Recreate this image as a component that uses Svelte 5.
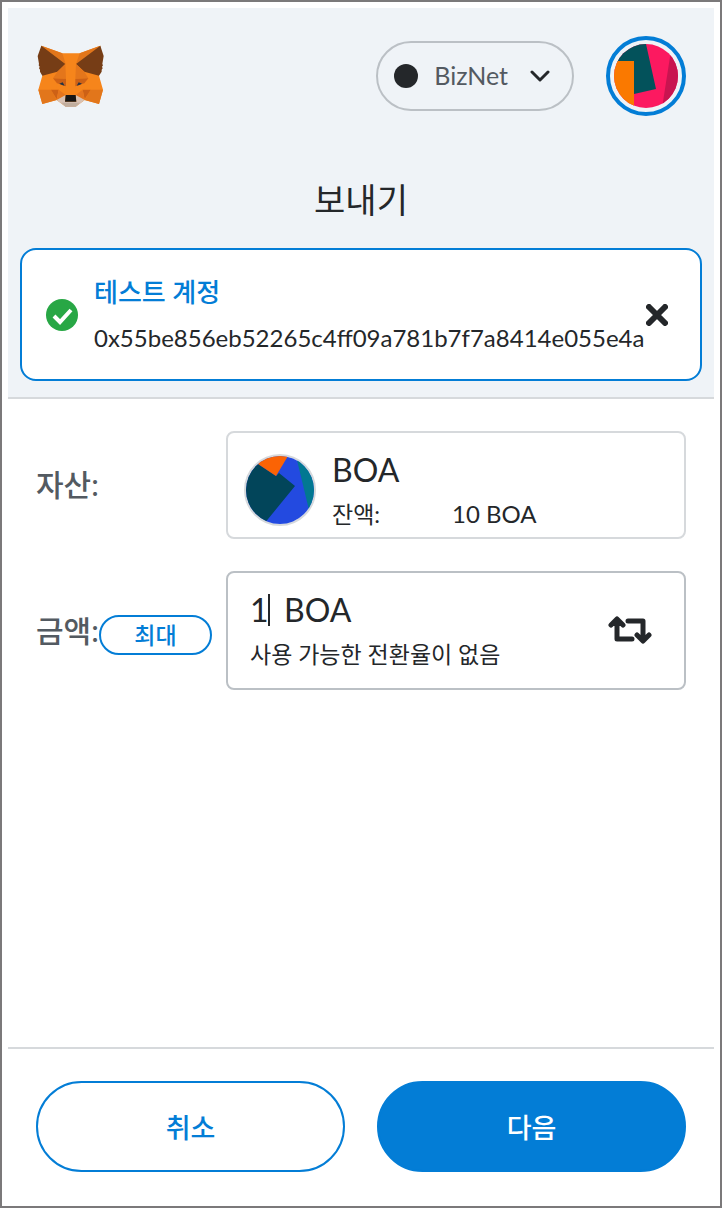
<script>
  let network = $state('BizNet');
  let amount = $state('1');
  const recipient = {
    name: '테스트 계정',
    address: '0x55be856eb52265c4ff09a781b7f7a8414e055e4a'
  };
  const token = { symbol: 'BOA', balance: '10' };
</script>

<div class="window">
  <header class="top">
    <div class="bar">
      <svg class="fox" viewBox="0 0 210 192" role="img" aria-label="MetaMask">
        <polygon points="16,5 79,28 131,28 193,5 189,95 201,137 189,180 146,168 119,188 89,188 62,168 19,180 7,137 19,95" fill="#f6851b" />
        <polygon points="16,5 79,28 89,60" fill="#e2761b" />
        <polygon points="193,5 131,28 120,60" fill="#e2761b" />
        <polygon points="16,5 5,36 9,60 8,64 11,68 9,73 12,77 12,83 19,95 64,83 88,60" fill="#763d16" />
        <polygon points="193,5 203,36 199,60 201,64 198,68 200,73 197,77 197,83 189,95 145,83 120,60" fill="#763d16" />
        <polygon points="88,60 64,83 51,103 90,105" fill="#e4761b" />
        <polygon points="120,60 145,83 157,103 118,105" fill="#e4761b" />
        <polygon points="51,103 63,118 61,137 89,152 90,127" fill="#f6851b" />
        <polygon points="157,103 145,118 147,137 119,152 118,127" fill="#f6851b" />
        <polygon points="51,103 63,118 90,127 90,105" fill="#cd6116" />
        <polygon points="157,103 145,118 118,127 118,105" fill="#cd6116" />
        <polygon points="7,137 45,137 62,168 19,180" fill="#e2761b" />
        <polygon points="201,137 164,137 146,168 189,180" fill="#e2761b" />
        <polygon points="45,137 68,137 62,166" fill="#cd6116" />
        <polygon points="164,137 140,137 146,166" fill="#cd6116" />
        <polygon points="68,137 89,153 62,168" fill="#e4751f" />
        <polygon points="140,137 119,153 146,168" fill="#e4751f" />
        <polygon points="70,119 80,115 86,125 78,123" fill="#233447" />
        <polygon points="138,119 128,115 122,125 130,123" fill="#233447" />
        <polygon points="62,168 89,153 87,173 121,173 119,153 146,168 119,188 89,188" fill="#d7c1b3" />
        <polygon points="76,176 132,176 119,188 89,188" fill="#c0ad9e" />
        <polygon points="89,153 119,153 121,173 87,173" fill="#161616" />
      </svg>
      <button class="network" type="button">
        <span class="dot"></span>
        <span class="network-name">{network}</span>
        <svg class="chevron" viewBox="0 0 20 12" aria-hidden="true">
          <path d="M2 2l8 8 8-8" fill="none" stroke="#24272a" stroke-width="3" stroke-linecap="round" stroke-linejoin="round" />
        </svg>
      </button>
      <button class="account" type="button" aria-label="내 계정">
        <svg viewBox="0 0 64 64" aria-hidden="true">
          <rect width="64" height="64" fill="#fc1960" />
          <path d="M58 0L48 64h16V0z" fill="#c81450" />
          <path d="M0 0h32l10 45-22 5V18H0z" fill="#03525b" />
          <path d="M0 17h20v47H0z" fill="#fa7900" />
        </svg>
      </button>
    </div>

    <h1>보내기</h1>

    <section class="recipient">
      <svg class="check" viewBox="0 0 32 32" aria-hidden="true">
        <circle cx="16" cy="16" r="16" fill="#28a745" />
        <path d="M8 17l6 6 11-12" fill="none" stroke="#fff" stroke-width="4" />
      </svg>
      <div class="who">
        <span class="name">{recipient.name}</span>
        <span class="address">{recipient.address}</span>
      </div>
      <button class="close" type="button" aria-label="지우기">
        <svg viewBox="0 0 22 22" aria-hidden="true">
          <path d="M3 3l16 16M19 3L3 19" stroke="#24272a" stroke-width="6" stroke-linecap="round" />
        </svg>
      </button>
    </section>
  </header>

  <main>
    <div class="row">
      <span class="label">자산:</span>
      <button class="field asset" type="button">
        <svg class="token" viewBox="0 0 68 68" aria-hidden="true">
          <rect width="68" height="68" fill="#234ae0" />
          <path d="M50 0l13 54 5 14V0z" fill="#027891" />
          <path d="M12 8l18 12 3-3 16 13-31 38H0V0z" fill="#02455a" />
          <path d="M12 8l18 12L42 0H8z" fill="#fb6304" />
        </svg>
        <span class="lines">
          <span class="big">{token.symbol}</span>
          <span class="balance"><span>잔액:</span><span>{token.balance} {token.symbol}</span></span>
        </span>
      </button>
    </div>

    <div class="row">
      <span class="label">
        <label for="amount">금액:</label>
        <button class="max" type="button">최대</button>
      </span>
      <div class="field amount">
        <div class="lines">
          <span class="entry">
            <input id="amount" type="text" inputmode="decimal" bind:value={amount} />
            <span class="caret"></span>
            <span class="big">{token.symbol}</span>
          </span>
          <span class="small">사용 가능한 전환율이 없음</span>
        </div>
        <button class="swap" type="button" aria-label="전환">
          <svg viewBox="0 0 44 28" aria-hidden="true">
            <path d="M24 23H9V4M3 9l6-6 6 6M20 5h15v19M29 19l6 6 6-6" fill="none" stroke="#24272a" stroke-width="5" stroke-linecap="round" stroke-linejoin="round" />
          </svg>
        </button>
      </div>
    </div>
  </main>

  <footer>
    <button class="cancel" type="button">취소</button>
    <button class="next" type="button">다음</button>
  </footer>
</div>

<style>
  :global(body) {
    margin: 0;
  }
  .window, .window * {
    box-sizing: border-box;
  }
  .window {
    display: flex;
    flex-direction: column;
    min-height: 100vh;
    padding: 6px;
    border: 2px solid #7b797a;
    background: #fff;
    color: #24272a;
    font-family: Lato, "Noto Sans CJK KR", sans-serif;
  }
  button, input {
    margin: 0;
    padding: 0;
    border: 0;
    background: none;
    color: inherit;
    font: inherit;
  }
  button {
    cursor: pointer;
  }
  svg {
    display: block;
    flex: none;
  }
  .top {
    padding: 28px 12px 16px;
    border-bottom: 2px solid #d6d9dc;
    background: #eff3f7;
  }
  .bar {
    display: flex;
    align-items: center;
    gap: 32px;
    padding: 0 16px;
  }
  .fox {
    width: 70px;
    height: 64px;
    margin-right: auto;
  }
  .network {
    display: flex;
    align-items: center;
    gap: 16px;
    height: 70px;
    padding: 0 22px 0 16px;
    border: 2px solid #bbc0c5;
    border-radius: 35px;
    color: #535a61;
    font-size: 25px;
  }
  .network-name {
    padding-bottom: 2px;
  }
  .dot {
    width: 24px;
    height: 24px;
    border-radius: 50%;
    background: #24272a;
  }
  .chevron {
    width: 20px;
    height: 12px;
    margin-left: 6px;
  }
  .account {
    width: 80px;
    height: 80px;
    padding: 4px;
    border: 4px solid #037dd6;
    border-radius: 50%;
  }
  .account svg {
    width: 64px;
    height: 64px;
    border-radius: 50%;
  }
  h1 {
    margin: 60px 0 24px;
    font-size: 34px;
    font-weight: 400;
    line-height: 48px;
    text-align: center;
  }
  .recipient {
    display: flex;
    align-items: center;
    height: 133px;
    padding: 0 32px 0 24px;
    border: 2px solid #037dd6;
    border-radius: 16px;
    background: #fff;
  }
  .check {
    width: 32px;
    height: 32px;
    margin-right: 16px;
  }
  .who {
    display: flex;
    flex: 1;
    flex-direction: column;
    gap: 10px;
    min-width: 0;
  }
  .name {
    color: #037dd6;
    font-size: 26px;
    font-weight: 500;
    line-height: 36px;
  }
  .address {
    font-size: 24px;
    line-height: 36px;
    white-space: nowrap;
  }
  .close svg {
    width: 22px;
    height: 22px;
  }
  main {
    display: flex;
    flex: 1;
    flex-direction: column;
    gap: 32px;
    padding: 32px 28px;
  }
  .row {
    display: grid;
    grid-template-columns: 176px 1fr;
    align-items: center;
    gap: 14px;
  }
  .label {
    display: flex;
    align-items: center;
    padding-bottom: 2px;
    color: #535a61;
    font-size: 30px;
    font-weight: 500;
    line-height: 40px;
  }
  .max {
    flex: 1;
    height: 40px;
    margin-top: 10px;
    border: 2px solid #037dd6;
    border-radius: 20px;
    color: #037dd6;
    font-size: 23px;
    line-height: 32px;
  }
  .field {
    display: flex;
    align-items: center;
    border: 2px solid #d6d9dc;
    border-radius: 8px;
    text-align: left;
  }
  .asset {
    height: 108px;
    padding: 10px 16px 0;
    gap: 16px;
  }
  .token {
    width: 72px;
    height: 72px;
    border: 2px solid #d6d9dc;
    border-radius: 50%;
  }
  .lines {
    display: flex;
    flex: 1;
    flex-direction: column;
    gap: 4px;
  }
  .big {
    font-size: 32px;
    line-height: 44px;
  }
  .balance {
    display: grid;
    grid-template-columns: 104px 1fr;
    gap: 16px;
    font-size: 24px;
    line-height: 36px;
  }
  .balance span:first-child, .small {
    font-size: 23px;
    line-height: 36px;
  }
  .amount {
    height: 119px;
    padding: 0 32px 2px 22px;
    border-color: #bbc0c5;
  }
  .entry {
    position: relative;
    display: flex;
    align-items: center;
    gap: 14px;
  }
  .entry input {
    width: 20px;
    height: 44px;
    outline: 0;
    font-size: 32px;
  }
  .caret {
    position: absolute;
    top: 6px;
    left: 18px;
    width: 2px;
    height: 32px;
    background: #24272a;
  }
  .swap svg {
    width: 44px;
    height: 28px;
  }
  footer {
    display: grid;
    grid-template-columns: 1fr 1fr;
    gap: 32px;
    padding: 32px 28px 28px;
    border-top: 2px solid #d6d9dc;
  }
  .cancel, .next {
    height: 91px;
    border: 2px solid #037dd6;
    border-radius: 46px;
    color: #037dd6;
    font-size: 27px;
    font-weight: 500;
  }
  .next {
    background: #037dd6;
    color: #fff;
  }
</style>
